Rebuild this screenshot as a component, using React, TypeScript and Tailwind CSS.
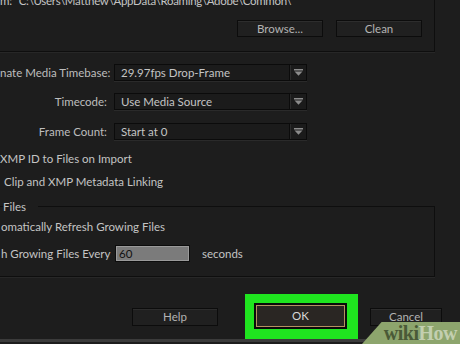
import React from "react";

const font = { fontFamily: 'Lato, "Noto Sans", sans-serif' };

function Arrow() {
  return (
    <svg width="9" height="7" viewBox="0 0 9 7" className="block">
      <rect x="0" y="0" width="9" height="1.5" fill="#8c8c8c" />
      <path d="M0.5 2.5 H8.5 L4.5 6.8 Z" fill="#8c8c8c" />
    </svg>
  );
}

function Dropdown({ value }: { value: string }) {
  return (
    <div className="flex h-[17px] w-[193px] items-stretch border border-[#0b0b0b] bg-[#1b1b1b] shadow-[0_1px_0_#2a2a2a]">
      <div className="flex flex-1 items-center pl-[6px] text-[#c4c4c4]">{value}</div>
      <div className="w-[1px] bg-[#0b0b0b]" />
      <div className="w-[1px] bg-[#2c2c2c]" />
      <div className="flex w-[15px] items-center justify-center">
        <Arrow />
      </div>
    </div>
  );
}

function Btn({ label, className = "" }: { label: string; className?: string }) {
  return (
    <div
      className={`flex items-center justify-center border border-[#0c0c0c] bg-[#202020] text-[#b3b3b3] shadow-[inset_0_1px_0_#2d2d2d] ${className}`}
    >
      {label}
    </div>
  );
}

function Row({ label, value }: { label: string; value: string }) {
  return (
    <div className="flex h-[17px] items-center">
      <div className="w-[107px] text-right whitespace-nowrap text-[#bdbdbd]">{label}</div>
      <div className="ml-[7px]">
        <Dropdown value={value} />
      </div>
    </div>
  );
}

export default function App() {
  return (
    <div
      className="relative flex h-[344px] w-[460px] flex-col overflow-hidden bg-[#1d1d1d] text-[11.5px] leading-none"
      style={font}
    >
      {/* top panel with path and buttons */}
      <div className="h-[52px] w-[435px] shrink-0 border-r border-b border-[#0e0e0e] shadow-[0_1px_0_#272727]">
        <div className="-mt-[6px] flex h-[14px] items-center whitespace-nowrap text-[#c4c4c4] tracking-[-0.3px]">
          <span>m:</span>
          <span className="ml-[7px]">C:\Users\Matthew\AppData\Roaming\Adobe\Common\</span>
        </div>
        <div className="mt-[12px] flex gap-[13px] pl-[237px]">
          <Btn label="Browse..." className="h-[17px] w-[86px]" />
          <Btn label="Clean" className="h-[17px] w-[86px]" />
        </div>
      </div>

      <div className="mt-[12px] flex flex-col">
        <Row label="nate Media Timebase:" value="29.97fps Drop-Frame" />
        <div className="mt-[12px]">
          <Row label="Timecode:" value="Use Media Source" />
        </div>
        <div className="mt-[13px]">
          <Row label="Frame Count:" value="Start at 0" />
        </div>
      </div>

      <div className="mt-[7px] flex h-[23px] items-center whitespace-nowrap text-[#c4c4c4]">
        XMP ID to Files on Import
      </div>
      <div className="flex h-[23px] items-center pl-[4px] whitespace-nowrap text-[#c4c4c4]">
        Clip and XMP Metadata Linking
      </div>

      <fieldset className="-ml-[12px] mt-[8px] h-[76px] w-[447px] shrink-0 border border-[#0e0e0e] px-[14px] shadow-[0_1px_0_#272727]">
        <legend className="pr-[12px] text-[#c4c4c4]">Files</legend>
        <div className="-ml-[2px] mt-[8px] whitespace-nowrap text-[#c4c4c4]">omatically Refresh Growing Files</div>
        <div className="-ml-[2px] mt-[13px] flex h-[17px] items-center whitespace-nowrap text-[#c4c4c4]">
          <span className="w-[114px]">h Growing Files Every</span>
          <div className="flex h-[17px] w-[75px] items-center border border-[#0c0c0c] bg-[#7b7b7b] pl-[3px] text-[#111] shadow-[inset_0_0_0_1px_#9a9a9a]">
            60
          </div>
          <span className="ml-[12px]">seconds</span>
        </div>
      </fieldset>

      <div className="mt-[17px] flex items-center">
        <Btn label="Help" className="ml-[132px] h-[18px] w-[86px]" />
        <div className="ml-[27px] flex h-[45px] w-[113px] items-center bg-[#1fe51f] pb-[2px] pl-[9px]">
          <div className="bg-[#0a0a0a] p-[2px]">
            <div className="flex h-[22px] w-[89px] items-center justify-center border border-[#b59060] bg-[#2a2623] text-[#d8d8d8]">
              OK
            </div>
          </div>
        </div>
        <Btn label="Cancel" className="ml-[12px] h-[18px] w-[72px]" />
      </div>

      <div className="h-[3px] w-full bg-[#3b3b3b]" />

      {/* wikiHow watermark */}
      <div
        className="absolute right-0 bottom-0 flex h-[22px] w-[98px] items-center justify-end bg-[#8da56d] pr-[3px]"
        style={{ clipPath: "polygon(20% 0, 100% 0, 100% 100%, 0 100%)" }}
      >
        <span
          className="text-[20px] font-bold leading-none tracking-tight"
          style={{ fontFamily: '"Liberation Serif", "DejaVu Serif", serif' }}
        >
          <span className="text-[#4a5a37]">wiki</span>
          <span className="text-[#c3cfb0]">How</span>
        </span>
      </div>
    </div>
  );
}
